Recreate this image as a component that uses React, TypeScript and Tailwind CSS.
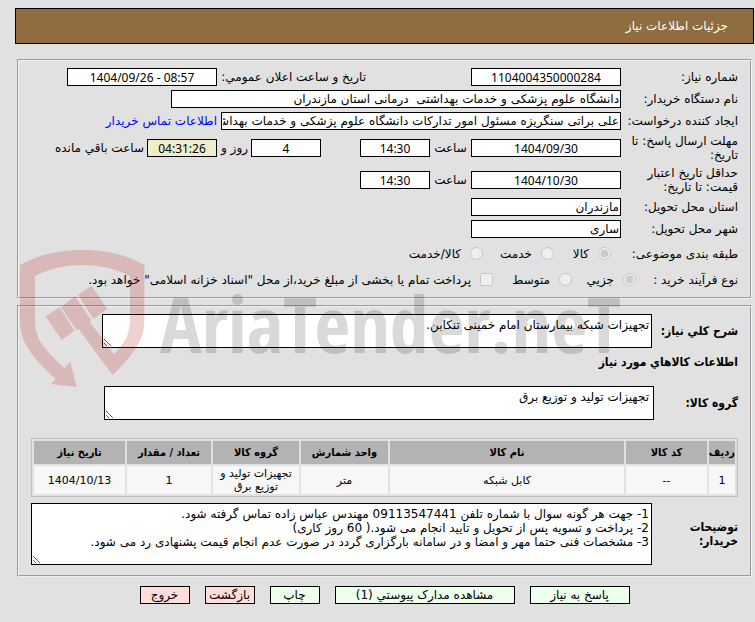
import type { ReactNode } from "react";

const box = "h-[18px] border border-black bg-white px-px leading-4";
const numeric = "text-center font-['Noto_Sans','DejaVu_Sans',sans-serif] text-[12px]";
const area = "block resize border border-black bg-white px-[2px] py-[3px] leading-[14px]";
const panel = "mx-[2px] border-2 border-[#f0f0f0] px-3 pt-[7px] [border-style:groove]";
const strong = "[font-family:'DejaVu_Sans_Condensed','DejaVu_Sans',sans-serif] font-bold";

function Field({ id, value, width, center, fill }: { id: string; value: string; width: string; center?: boolean; fill?: string }) {
  return (
    <input
      id={id}
      type="text"
      readOnly
      dir={center ? "ltr" : "rtl"}
      defaultValue={value}
      className={`${box} ${width} ${center ? numeric : ""} ${fill ?? ""}`}
    />
  );
}

function Row({ id, label, tall, children }: { id: string; label: ReactNode; tall?: boolean; children: ReactNode }) {
  return (
    <div className={`flex items-center ${tall ? "h-7" : "h-[18px]"}`}>
      <label htmlFor={id} className="w-[117px] shrink-0 leading-[14px] whitespace-nowrap">
        {label}
      </label>
      {children}
    </div>
  );
}

function Choice({ name, label, checked, width }: { name: string; label: string; checked?: boolean; width: string }) {
  return (
    <label className={`flex shrink-0 items-center whitespace-nowrap ${width}`}>
      <input type="radio" name={name} disabled defaultChecked={checked} className="mb-[2px] ml-[9px] size-[13px]" />
      {label}
    </label>
  );
}

const columns = [
  { title: "ردیف", width: "w-[26px]" },
  { title: "کد کالا", width: "w-[81px]" },
  { title: "نام کالا", width: "" },
  { title: "واحد شمارش", width: "w-[87px]" },
  { title: "گروه کالا", width: "w-[86px]" },
  { title: "تعداد / مقدار", width: "w-[84px]" },
  { title: "تاریخ نیاز", width: "w-[91px]" },
];

const item = ["1", "--", "کابل شبکه", "متر", "تجهیزات تولید و توزیع برق", "1", "1404/10/13"];

const actions = [
  { text: "پاسخ به نیاز", look: "w-[100px] bg-[#eeffee]" },
  { text: "مشاهده مدارک پیوستي (1)", look: "w-[180px] bg-[#eeffee]" },
  { text: "چاپ", look: "w-[50px] bg-[#eeffee]" },
  { text: "بازگشت", look: "w-[50px] bg-[#ffdddd]" },
  { text: "خروج", look: "w-[50px] bg-[#ffdddd]" },
];

function Watermark() {
  return (
    <div dir="ltr" aria-hidden="true" className="pointer-events-none absolute top-[240px] left-[10px] flex">
      <svg viewBox="0 0 450 465" className="h-[155px] w-[150px] shrink-0" fill="rgb(185,20,30)" fillOpacity="0.2">
        <path d="M30 75C90 42 150 30 216 30C285 30 345 42 403 75V235C403 295 385 328 308 406L206 267L199 269L153 202L195 168L243 240L239 245L312 343C345 308 360 285 360 235V108C320 88 270 75 216 75C165 75 115 88 75 108V240C75 300 105 330 163 384L181 365L200 441L122 432L137 417C60 345 30 305 30 240Z" />
        <path d="M107 229L149 202L193 272L155 300Z" />
        <path d="M204 164L245 137L291 207L250 236Z" />
      </svg>
      <span className="pt-[44px] font-['Open_Sans_Condensed','Roboto_Condensed',sans-serif] text-[78px] leading-[78px] font-bold whitespace-nowrap text-black/15">
        AriaTender.neT
      </span>
    </div>
  );
}

export default function App() {
  return (
    <div
      dir="rtl"
      className="relative min-h-screen overflow-hidden bg-[#e1e1e1] pt-2 pr-px pb-[18px] pl-[15px] font-['DejaVu_Sans',sans-serif] text-[12px] leading-4 text-black"
    >
      <h1 className="flex h-9 items-center border border-black bg-[#8f6d40] px-[25px] text-white">جزئیات اطلاعات نیاز</h1>

      <fieldset className={`${panel} mt-[15px] space-y-1 pb-[7px]`}>
        <Row id="number" label="شماره نیاز:">
          <Field id="number" value="1104004350000284" width="w-[150px]" center />
          <label htmlFor="announced" className="mr-[105px] w-[149px] whitespace-nowrap">
            تاریخ و ساعت اعلان عمومي:
          </label>
          <Field id="announced" value="1404/09/26 - 08:57" width="w-[150px]" center />
        </Row>
        <Row id="buyer" label="نام دستگاه خریدار:">
          <Field id="buyer" value="دانشگاه علوم پزشکی و خدمات بهداشتی  درمانی استان مازندران" width="w-[450px]" />
        </Row>
        <Row id="creator" label="ایجاد کننده درخواست:">
          <Field
            id="creator"
            value="علی براتی سنگریزه مسئول امور تدارکات دانشگاه علوم پزشکی و خدمات بهداشتی  درمانی استان مازندران"
            width="w-[400px]"
          />
          <a href="#contact" className="mr-1 whitespace-nowrap text-[#0000ff]">
            اطلاعات تماس خریدار
          </a>
        </Row>
        <Row
          id="deadline"
          tall
          label={
            <>
              مهلت ارسال پاسخ: تا
              <br />
              تاریخ:
            </>
          }
        >
          <Field id="deadline" value="1404/09/30" width="w-[150px]" center />
          <label htmlFor="deadline-time" className="w-[41px] text-center">ساعت</label>
          <Field id="deadline-time" value="14:30" width="w-[70px]" center />
          <Field id="days" value="4" width="mr-[39px] w-[70px]" center />
          <label htmlFor="days" className="w-[34px] pr-[3px] whitespace-nowrap">روز و</label>
          <Field id="remaining" value="04:31:26" width="w-[70px]" center fill="bg-[#eeeecc]!" />
          <label htmlFor="remaining" className="pr-[3px] whitespace-nowrap">ساعت باقي مانده</label>
        </Row>
        <Row
          id="validity"
          tall
          label={
            <>
              حداقل تاریخ اعتبار
              <br />
              قیمت: تا تاریخ:
            </>
          }
        >
          <Field id="validity" value="1404/10/30" width="w-[150px]" center />
          <label htmlFor="validity-time" className="w-[41px] text-center">ساعت</label>
          <Field id="validity-time" value="14:30" width="w-[70px]" center />
        </Row>
        <Row id="province" label="استان محل تحویل:">
          <Field id="province" value="مازندران" width="w-[150px]" />
        </Row>
        <Row id="city" label="شهر محل تحویل:">
          <Field id="city" value="ساری" width="w-[150px]" />
        </Row>
        <div role="radiogroup" aria-labelledby="category" className="flex h-6 items-center">
          <span id="category" className="w-[127px] shrink-0 whitespace-nowrap">طبقه بندی موضوعی:</span>
          <Choice name="category" label="کالا" checked width="w-[57px]" />
          <Choice name="category" label="خدمت" width="w-[71px]" />
          <Choice name="category" label="کالا/خدمت" width="w-[90px]" />
        </div>
        <div role="radiogroup" aria-labelledby="process" className="flex h-5 items-center">
          <span id="process" className="w-[102px] shrink-0 whitespace-nowrap">نوع فرآیند خرید :</span>
          <Choice name="process" label="جزیي" checked width="w-[64px]" />
          <Choice name="process" label="متوسط" width="w-[79px]" />
          <label className="flex items-center whitespace-nowrap">
            <input type="checkbox" disabled className="mb-[2px] ml-[9px] size-[13px]" />
            پرداخت تمام یا بخشی از مبلغ خرید،از محل "اسناد خزانه اسلامی" خواهد بود.
          </label>
        </div>
      </fieldset>

      <fieldset className={`${panel} mt-[6px] pb-[10px]`}>
        <div className="flex items-center">
          <label htmlFor="summary" className={`${strong} w-[86px] shrink-0 whitespace-nowrap`}>شرح کلي نیاز:</label>
          <textarea id="summary" readOnly defaultValue="تجهیزات شبکه بیمارستان امام خمینی تنکابن." className={`${area} h-[34px] w-[550px]`} />
        </div>
        <h2 className={`${strong} mt-[6px]`}>اطلاعات کالاهاي مورد نیاز</h2>
        <div className="mt-4 flex items-center">
          <label htmlFor="group" className={`${strong} w-[84px] shrink-0 whitespace-nowrap`}>گروه کالا:</label>
          <textarea id="group" readOnly defaultValue="تجهیزات تولید و توزیع برق" className={`${area} h-[34px] w-[550px] pr-1`} />
        </div>
        <table className="mt-[18px] w-full table-fixed border-separate border-spacing-[2px] border border-[#c0c0c0] text-center text-[11px] leading-[13px]">
          <thead>
            <tr className="h-[23px]">
              {columns.map((c) => (
                <th key={c.title} scope="col" className={`${strong} bg-[#b3b3b3] p-0 whitespace-nowrap ${c.width}`}>
                  {c.title}
                </th>
              ))}
            </tr>
          </thead>
          <tbody>
            <tr className="h-7">
              {item.map((v, i) => (
                <td key={i} className="bg-[#f7f7f7] p-0">
                  {v}
                </td>
              ))}
            </tr>
          </tbody>
        </table>
        <div className="mt-[6px] flex items-center">
          <label htmlFor="notes" className={`${strong} w-[86px] shrink-0 leading-[14px]`}>
            توضیحات
            <br />
            خریدار:
          </label>
          <textarea
            id="notes"
            readOnly
            defaultValue={
              "1- جهت هر گونه سوال با شماره تلفن 09113547441 مهندس عباس زاده تماس گرفته شود.\n2- پرداخت و تسویه پس از تحویل و تایید انجام می شود.( 60 روز کاری)\n3- مشخصات فنی حتما مهر و امضا و در سامانه بارگزاری گردد در صورت عدم انجام قیمت پشنهادی رد می شود."
            }
            className={`${area} h-[62px] min-w-0 flex-1`}
          />
        </div>
      </fieldset>

      <div className="mt-[9px] flex justify-center gap-[15px]">
        {actions.map((a) => (
          <button key={a.text} type="button" className={`h-[18px] border border-black leading-4 whitespace-nowrap ${a.look}`}>
            {a.text}
          </button>
        ))}
      </div>

      <Watermark />
    </div>
  );
}
